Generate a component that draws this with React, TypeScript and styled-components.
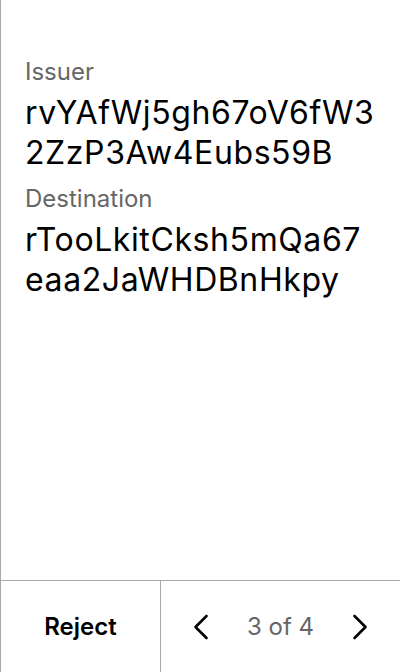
import React from "react";
import styled, { createGlobalStyle } from "styled-components";

const Global = createGlobalStyle`
  html, body { margin: 0; padding: 0; background: #fff; }
  body { font-family: Inter, "Noto Sans", sans-serif; }
  * { box-sizing: border-box; }
`;

const Screen = styled.div`
  width: 400px;
  height: 672px;
  display: flex;
  flex-direction: column;
  border-left: 1px solid #a8a8a8;
  background: #fff;
  color: #000;
`;

const Content = styled.div`
  flex: 1;
  padding: 56px 24px 0 24px;
  display: flex;
  flex-direction: column;
`;

const Field = styled.div`
  display: flex;
  flex-direction: column;
  margin-bottom: 10px;
`;

const Label = styled.div`
  font-size: 24px;
  line-height: 32px;
  color: #666;
  margin-bottom: 5px;
`;

const Value = styled.div`
  font-size: 32px;
  line-height: 40px;
  letter-spacing: 0.6px;
  color: #000;
  word-break: break-all;
`;

const Footer = styled.div`
  height: 92px;
  display: flex;
  border-top: 1px solid #a8a8a8;
`;

const RejectButton = styled.button`
  width: 160px;
  border: none;
  border-right: 1px solid #a8a8a8;
  background: none;
  font-family: inherit;
  font-size: 24px;
  font-weight: 600;
  color: #000;
  padding: 0;
`;

const Pager = styled.div`
  flex: 1;
  display: flex;
  align-items: center;
  justify-content: space-between;
  padding: 0 28px;
`;

const IconButton = styled.button`
  width: 24px;
  height: 32px;
  border: none;
  background: none;
  padding: 0;
  display: flex;
  align-items: center;
  justify-content: center;
  color: #000;
`;

const PageText = styled.span`
  font-size: 24px;
  color: #666;
`;

const Chevron = ({ dir }: { dir: "left" | "right" }) => (
  <svg width="16" height="26" viewBox="0 0 16 26" fill="none">
    <polyline
      points={dir === "left" ? "14,2 3,13 14,24" : "2,2 13,13 2,24"}
      stroke="currentColor"
      strokeWidth="2.6"
      strokeLinecap="round"
      strokeLinejoin="round"
      transform={dir === "left" ? "translate(-0.5 0)" : "translate(0.5 0)"}
    />
  </svg>
);

export default function App() {
  return (
    <>
      <Global />
      <Screen>
        <Content>
          <Field>
            <Label>Issuer</Label>
            <Value>rvYAfWj5gh67oV6fW32ZzP3Aw4Eubs59B</Value>
          </Field>
          <Field>
            <Label>Destination</Label>
            <Value>rTooLkitCksh5mQa67eaa2JaWHDBnHkpy</Value>
          </Field>
        </Content>
        <Footer>
          <RejectButton>Reject</RejectButton>
          <Pager>
            <IconButton aria-label="Previous">
              <Chevron dir="left" />
            </IconButton>
            <PageText>3 of 4</PageText>
            <IconButton aria-label="Next">
              <Chevron dir="right" />
            </IconButton>
          </Pager>
        </Footer>
      </Screen>
    </>
  );
}
